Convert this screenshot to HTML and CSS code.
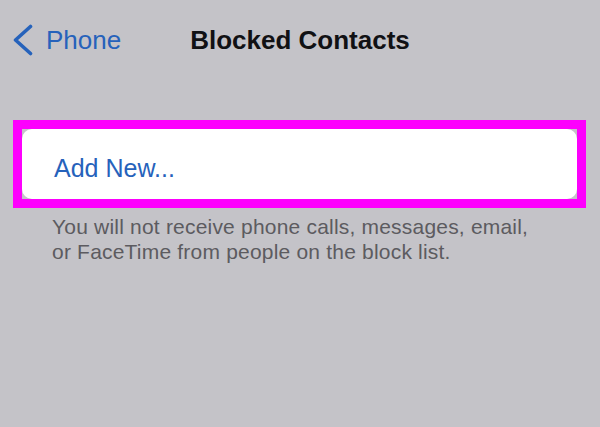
FILE: index.html
```html
<!DOCTYPE html>
<html lang="en">
<head>
    <meta charset="UTF-8">
    <meta name="viewport" content="width=device-width, initial-scale=1.0">
    <title>Blocked Contacts</title>
    <link rel="stylesheet" href="styles.css">
</head>
<body>
    <div class="nav-bar">
        <div class="nav-back">
            <svg class="back-icon" width="20" height="32" viewBox="0 0 20 32">
                <polyline points="17.5,2.5 2.5,16 17.5,29.5" fill="none" stroke="currentColor" stroke-width="3.6" stroke-linecap="round" stroke-linejoin="round"/>
            </svg>
            <span class="back-label">Phone</span>
        </div>
        <div class="nav-title">Blocked Contacts</div>
        <div></div>
    </div>

    <div class="highlight">
        <div class="list-card">
            <div class="list-item">Add New...</div>
        </div>
    </div>

    <p class="footer-note">
        You will not receive phone calls, messages, email,<br>
        or FaceTime from people on the block list.
    </p>
</body>
</html>
```

FILE: styles.css
```css
:root {
    --bg-color: #c4c3c8;
    --link-color: #2662bb;
    --title-color: #111114;
    --note-color: #5c5b60;
    --marker-color: #fd00fd;
}

body {
    margin: 0;
    background-color: var(--bg-color);
    font-family: "Liberation Sans", Arial, sans-serif;
    -webkit-font-smoothing: antialiased;
}

.nav-bar {
    display: grid;
    grid-template-columns: 1fr auto 1fr;
    align-items: center;
    padding: 24px 0 0 0;
    height: 32px;
}

.nav-back {
    display: flex;
    align-items: center;
    color: var(--link-color);
    padding-left: 13px;
}

.back-icon {
    display: block;
    margin-right: 13px;
}

.back-label {
    font-size: 26px;
    line-height: 32px;
}

.nav-title {
    font-size: 26px;
    font-weight: 700;
    line-height: 32px;
    color: var(--title-color);
}

.highlight {
    margin: 64px 14px 0 13px;
    border: 9px solid var(--marker-color);
}

.list-card {
    background: #ffffff;
    border-radius: 10px;
}

.list-item {
    height: 70px;
    box-sizing: border-box;
    padding: 25px 32px 0 32px;
    font-size: 25px;
    color: var(--link-color);
}

.footer-note {
    margin: 6px 0 0 52px;
    font-size: 21px;
    line-height: 25px;
    letter-spacing: 0.2px;
    color: var(--note-color);
}
```
